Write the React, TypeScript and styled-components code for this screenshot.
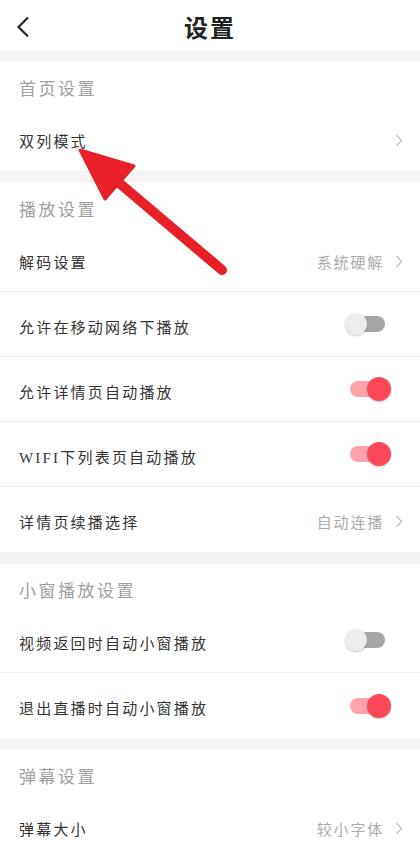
import React from 'react';
import styled, { createGlobalStyle } from 'styled-components';

const GlobalStyle = createGlobalStyle`
    body {
        margin: 0;
        background: #ffffff;
        font-family: "Liberation Serif", "Noto Sans CJK SC", serif;
    }
`;

const Page = styled.div`
    position: relative;
    width: 420px;
    height: 860px;
    overflow: hidden;
    background: #ffffff;
    display: flex;
    flex-direction: column;
`;

const Header = styled.div`
    height: 50px;
    display: grid;
    grid-template-columns: 60px 1fr 60px;
    align-items: center;
    padding-top: 3px;
    box-sizing: border-box;
`;

const BackButton = styled.div`
    display: flex;
    align-items: center;
    padding-left: 16px;
    height: 24px;
`;

const Title = styled.div`
    text-align: center;
    font-size: 24px;
    font-weight: bold;
    color: #222222;
    letter-spacing: 2px;
    font-family: "Noto Sans CJK SC", sans-serif;
`;

const Band = styled.div`
    height: 12px;
    background: #f5f5f5;
    flex-shrink: 0;
`;

const SectionTitle = styled.div`
    height: 44px;
    box-sizing: border-box;
    padding: 17px 19px 0;
    font-size: 17px;
    line-height: 22px;
    letter-spacing: 2.5px;
    color: #a0a0a0;
`;

const Row = styled.div<{ $last?: boolean }>`
    height: 65px;
    box-sizing: border-box;
    padding: 4px 17px 0 19px;
    display: flex;
    align-items: center;
    justify-content: space-between;
    border-bottom: ${p => (p.$last ? 'none' : '1px solid #f0f0f0')};
    flex-shrink: 0;
`;

const Label = styled.span`
    font-size: 15px;
    letter-spacing: 2.2px;
    color: #333333;
`;

const Value = styled.div`
    display: flex;
    align-items: center;
    gap: 11px;
    font-size: 15px;
    letter-spacing: 1.8px;
    color: #acacac;
`;

const Switch = styled.div`
    position: relative;
    width: 46px;
    height: 24px;
    margin-right: 12px;
    margin-top: -4px;
`;

const Track = styled.div<{ $on: boolean }>`
    position: absolute;
    top: 4px;
    left: ${p => (p.$on ? '5px' : '0')};
    width: ${p => (p.$on ? '35px' : '40px')};
    height: 16px;
    border-radius: 8px;
    background: ${p => (p.$on ? '#ffa3ab' : '#a6a6a6')};
`;

const Thumb = styled.div<{ $on: boolean }>`
    position: absolute;
    top: ${p => (p.$on ? '0' : '1px')};
    left: ${p => (p.$on ? '22px' : '0')};
    width: ${p => (p.$on ? '24px' : '22px')};
    height: ${p => (p.$on ? '24px' : '22px')};
    border-radius: 50%;
    background: ${p => (p.$on ? '#fc4859' : '#ececec')};
    box-shadow: 0 1px 2px rgba(0, 0, 0, 0.22);
`;

const Arrow = styled.svg`
    position: absolute;
    left: 0;
    top: 0;
    pointer-events: none;
`;

const Chevron = () => (
    <svg width="8" height="13" viewBox="0 0 8 13">
        <polyline points="1.5,1 6.5,6.5 1.5,12" fill="none" stroke="#c2c2c2" strokeWidth="1.3" />
    </svg>
);

const Toggle: React.FC<{ on: boolean }> = ({ on }) => (
    <Switch>
        <Track $on={on} />
        <Thumb $on={on} />
    </Switch>
);

type Item = { label: string; value?: string; toggle?: boolean; on?: boolean };

const sections: { title: string; items: Item[] }[] = [
    { title: '首页设置', items: [{ label: '双列模式', value: '' }] },
    {
        title: '播放设置',
        items: [
            { label: '解码设置', value: '系统硬解' },
            { label: '允许在移动网络下播放', toggle: true, on: false },
            { label: '允许详情页自动播放', toggle: true, on: true },
            { label: 'WIFI下列表页自动播放', toggle: true, on: true },
            { label: '详情页续播选择', value: '自动连播' },
        ],
    },
    {
        title: '小窗播放设置',
        items: [
            { label: '视频返回时自动小窗播放', toggle: true, on: false },
            { label: '退出直播时自动小窗播放', toggle: true, on: true },
        ],
    },
    { title: '弹幕设置', items: [{ label: '弹幕大小', value: '较小字体' }] },
];

export default function App() {
    return (
        <>
            <GlobalStyle />
            <Page>
                <Header>
                    <BackButton>
                        <svg width="14" height="22" viewBox="0 0 14 22">
                            <polyline points="12,1.5 2.5,11 12,20.5" fill="none" stroke="#2a2a2a" strokeWidth="2.2" />
                        </svg>
                    </BackButton>
                    <Title>设置</Title>
                    <span />
                </Header>
                {sections.map(section => (
                    <React.Fragment key={section.title}>
                        <Band />
                        <SectionTitle>{section.title}</SectionTitle>
                        {section.items.map((item, i) => (
                            <Row key={item.label} $last={i === section.items.length - 1}>
                                <Label>{item.label}</Label>
                                {item.toggle ? (
                                    <Toggle on={!!item.on} />
                                ) : (
                                    <Value>
                                        {item.value}
                                        <Chevron />
                                    </Value>
                                )}
                            </Row>
                        ))}
                    </React.Fragment>
                ))}
                <Arrow width="420" height="860" viewBox="0 0 420 860">
                    <line x1="222" y1="270" x2="118" y2="182" stroke="#e8202a" strokeWidth="10" strokeLinecap="round" />
                    <polygon points="80,150 134,166 105,199" fill="#e8202a" stroke="#e8202a" strokeWidth="3" strokeLinejoin="round" />
                </Arrow>
            </Page>
        </>
    );
}
